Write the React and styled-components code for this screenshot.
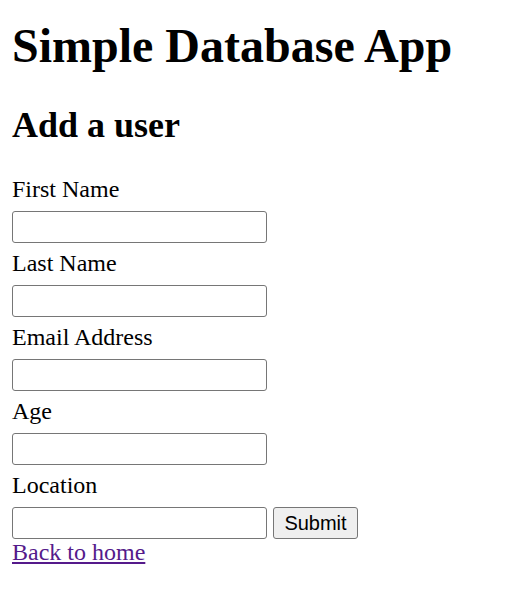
import React from "react";
import styled, { createGlobalStyle } from "styled-components";

const GlobalStyle = createGlobalStyle`
  html, body { margin: 0; padding: 0; background: #ffffff; }
  body { font-family: "Liberation Serif", "Times New Roman", serif; color: #000; }
`;

const Page = styled.div`
  padding: 0 12px;
`;

const Title = styled.h1`
  margin: 18px 0 31px;
  font-size: 48px;
  font-weight: bold;
  line-height: normal;
`;

const Subtitle = styled.h2`
  margin: 0 0 29.5px;
  font-size: 36px;
  font-weight: bold;
  line-height: normal;
`;

const Form = styled.form`
  display: flex;
  flex-direction: column;
`;

const Field = styled.div`
  display: flex;
  flex-direction: column;
  margin-bottom: ${(p) => (p.$last ? "0" : "6.75px")};
`;

const Label = styled.label`
  font-size: 24px;
  line-height: normal;
`;

const Row = styled.div`
  display: flex;
  align-items: flex-start;
  gap: 6px;
  margin-top: 8.4px;
`;

const Input = styled.input`
  box-sizing: border-box;
  width: 255px;
  height: 32px;
  margin: 0;
  padding: 1.5px 3px;
  border: 1px solid #767676;
  border-radius: 3px;
  background: #fff;
  font-family: "Liberation Sans", Arial, sans-serif;
  font-size: 20px;
  outline: none;
`;

const Button = styled.button`
  box-sizing: border-box;
  height: 32px;
  width: 85px;
  margin: 0;
  padding: 1.5px 9px;
  border: 1px solid #767676;
  border-radius: 3px;
  background: #efefef;
  color: #000;
  font-family: "Liberation Sans", Arial, sans-serif;
  font-size: 20px;
  line-height: normal;
`;

const HomeLink = styled.a`
  font-size: 24px;
  line-height: normal;
  color: #551a8b;
  text-decoration: underline;
  align-self: flex-start;
`;

const fields = [
  { id: "first", label: "First Name" },
  { id: "last", label: "Last Name" },
  { id: "email", label: "Email Address" },
  { id: "age", label: "Age" },
];

export default function App() {
  return (
    <>
      <GlobalStyle />
      <Page>
        <Title>Simple Database App</Title>
        <Subtitle>Add a user</Subtitle>
        <Form onSubmit={(e) => e.preventDefault()}>
          {fields.map((f) => (
            <Field key={f.id}>
              <Label htmlFor={f.id}>{f.label}</Label>
              <Row>
                <Input id={f.id} type="text" />
              </Row>
            </Field>
          ))}
          <Field $last>
            <Label htmlFor="location">Location</Label>
            <Row>
              <Input id="location" type="text" />
              <Button type="submit">Submit</Button>
            </Row>
          </Field>
          <HomeLink href="#home">Back to home</HomeLink>
        </Form>
      </Page>
    </>
  );
}
